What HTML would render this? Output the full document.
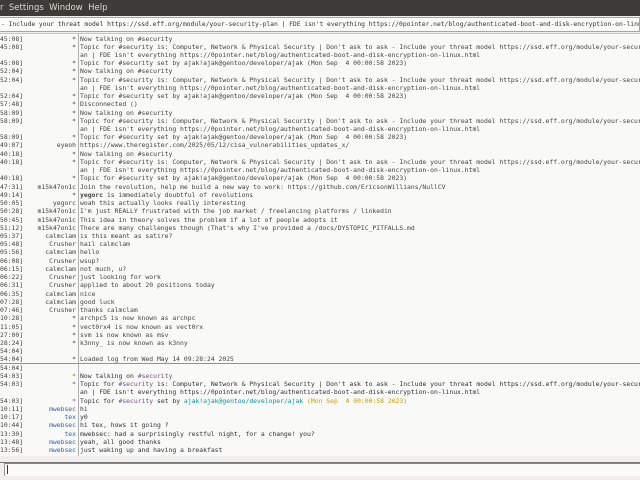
<!DOCTYPE html>
<html><head><meta charset="utf-8"><style>
*{margin:0;padding:0;box-sizing:border-box}
body{width:640px;height:480px;overflow:hidden;background:#f0efed;position:relative;font-family:"DejaVu Sans Mono","Liberation Mono",monospace}
#menu{position:absolute;left:0;top:0;width:640px;height:16px;background:#3c3b37;color:#dfdbd2;font:8.5px "DejaVu Sans","Liberation Sans",sans-serif;line-height:16px;white-space:pre}
#topic{position:absolute;left:0;top:17px;width:640px;height:15px;background:#fbfbfa;border:1px solid #a8a6a2;border-left:none;font-size:6.3px;line-height:13px;color:#333;white-space:pre;padding-left:1px;overflow:hidden}
#chat{position:absolute;left:0;top:33px;width:640px;height:423px;background:#f9f9f7;overflow:hidden;border-top:1px solid #c8c6c2}
#vl{position:absolute;left:78px;top:0;width:1px;height:423px;background:#b0b0b0}
.r{position:absolute;left:0;width:640px;height:8.23px;font-size:6.4px;line-height:8.23px;white-space:pre;color:#444}
.t{position:absolute;left:0}
.n{position:absolute;right:564px;text-align:right}
.x{position:absolute;left:80px}
.p{color:#75507b}.g{color:#4e9a06}.c{color:#06989a}.y{color:#c4a000}.b{color:#3465a4}
.low .x{color:#2e3436}
#sep{position:absolute;left:0;width:640px;height:1px;background:#c0855c;z-index:5}
#inp{position:absolute;left:4px;top:463px;width:640px;height:13px;background:#fbfbfa;border-top:1px solid #888;border-left:1px solid #999}
#line{position:absolute;left:0;top:462px;width:640px;height:1px;background:#777}
#caret{position:absolute;left:7px;top:465px;width:1px;height:9px;background:#333}
</style></head><body>
<div id="menu">r  Settings  Window  Help</div>
<div id="topic">- Include your threat model https://ssd.eff.org/module/your-security-plan | FDE isn't everything https://0pointer.net/blog/authenticated-boot-and-disk-encryption-on-linux.html</div>
<div id="chat">
<div id="vl"></div>
<div class="r" style="top:0.5px"><span class="t">45:08]</span><span class="n">*</span><span class="x">Now talking on #security</span></div>
<div class="r" style="top:8.73px"><span class="t">45:08]</span><span class="n">*</span><span class="x">Topic for #security is: Computer, Network &amp; Physical Security | Don't ask to ask - Include your threat model https://ssd.eff.org/module/your-security-plan</span></div>
<div class="r" style="top:16.96px"><span class="x">an | FDE isn't everything https://0pointer.net/blog/authenticated-boot-and-disk-encryption-on-linux.html</span></div>
<div class="r" style="top:25.19px"><span class="t">45:08]</span><span class="n">*</span><span class="x">Topic for #security set by ajak!ajak@gentoo/developer/ajak (Mon Sep  4 00:00:58 2023)</span></div>
<div class="r" style="top:33.42px"><span class="t">52:04]</span><span class="n">*</span><span class="x">Now talking on #security</span></div>
<div class="r" style="top:41.65px"><span class="t">52:04]</span><span class="n">*</span><span class="x">Topic for #security is: Computer, Network &amp; Physical Security | Don't ask to ask - Include your threat model https://ssd.eff.org/module/your-security-plan</span></div>
<div class="r" style="top:49.88px"><span class="x">an | FDE isn't everything https://0pointer.net/blog/authenticated-boot-and-disk-encryption-on-linux.html</span></div>
<div class="r" style="top:58.11px"><span class="t">52:04]</span><span class="n">*</span><span class="x">Topic for #security set by ajak!ajak@gentoo/developer/ajak (Mon Sep  4 00:00:58 2023)</span></div>
<div class="r" style="top:66.34px"><span class="t">57:48]</span><span class="n">*</span><span class="x">Disconnected ()</span></div>
<div class="r" style="top:74.57px"><span class="t">58:09]</span><span class="n">*</span><span class="x">Now talking on #security</span></div>
<div class="r" style="top:82.8px"><span class="t">58:09]</span><span class="n">*</span><span class="x">Topic for #security is: Computer, Network &amp; Physical Security | Don't ask to ask - Include your threat model https://ssd.eff.org/module/your-security-plan</span></div>
<div class="r" style="top:91.03px"><span class="x">an | FDE isn't everything https://0pointer.net/blog/authenticated-boot-and-disk-encryption-on-linux.html</span></div>
<div class="r" style="top:99.26px"><span class="t">58:09]</span><span class="n">*</span><span class="x">Topic for #security set by ajak!ajak@gentoo/developer/ajak (Mon Sep  4 00:00:58 2023)</span></div>
<div class="r" style="top:107.49px"><span class="t">49:07]</span><span class="n">eyeoh</span><span class="x">https://www.theregister.com/2025/05/12/cisa_vulnerabilities_updates_x/</span></div>
<div class="r" style="top:115.72px"><span class="t">40:18]</span><span class="n">*</span><span class="x">Now talking on #security</span></div>
<div class="r" style="top:123.95px"><span class="t">40:18]</span><span class="n">*</span><span class="x">Topic for #security is: Computer, Network &amp; Physical Security | Don't ask to ask - Include your threat model https://ssd.eff.org/module/your-security-plan</span></div>
<div class="r" style="top:132.18px"><span class="x">an | FDE isn't everything https://0pointer.net/blog/authenticated-boot-and-disk-encryption-on-linux.html</span></div>
<div class="r" style="top:140.41px"><span class="t">40:18]</span><span class="n">*</span><span class="x">Topic for #security set by ajak!ajak@gentoo/developer/ajak (Mon Sep  4 00:00:58 2023)</span></div>
<div class="r" style="top:148.64px"><span class="t">47:31]</span><span class="n">m15k47on1c</span><span class="x">Join the revolution, help me build a new way to work: https://github.com/EricsonWillians/NullCV</span></div>
<div class="r" style="top:156.87px"><span class="t">49:14]</span><span class="n">*</span><span class="x"><b>yegorc</b> is immediately doubtful of revolutions</span></div>
<div class="r" style="top:165.1px"><span class="t">50:05]</span><span class="n">yegorc</span><span class="x">woah this actually looks really interesting</span></div>
<div class="r" style="top:173.33px"><span class="t">50:28]</span><span class="n">m15k47on1c</span><span class="x">I'm just REALLY frustrated with the job market / freelancing platforms / linkedin</span></div>
<div class="r" style="top:181.56px"><span class="t">50:45]</span><span class="n">m15k47on1c</span><span class="x">This idea in theory solves the problem if a lot of people adopts it</span></div>
<div class="r" style="top:189.79px"><span class="t">51:12]</span><span class="n">m15k47on1c</span><span class="x">There are many challenges though (That's why I've provided a /docs/DYSTOPIC_PITFALLS.md</span></div>
<div class="r" style="top:198.02px"><span class="t">05:37]</span><span class="n">calmclam</span><span class="x">is this meant as satire?</span></div>
<div class="r" style="top:206.25px"><span class="t">05:48]</span><span class="n">Crusher</span><span class="x">hail calmclam</span></div>
<div class="r" style="top:214.48px"><span class="t">05:56]</span><span class="n">calmclam</span><span class="x">hello</span></div>
<div class="r" style="top:222.71px"><span class="t">06:08]</span><span class="n">Crusher</span><span class="x">wsup?</span></div>
<div class="r" style="top:230.94px"><span class="t">06:15]</span><span class="n">calmclam</span><span class="x">not much, u?</span></div>
<div class="r" style="top:239.17px"><span class="t">06:22]</span><span class="n">Crusher</span><span class="x">just looking for work</span></div>
<div class="r" style="top:247.4px"><span class="t">06:31]</span><span class="n">Crusher</span><span class="x">applied to about 20 positions today</span></div>
<div class="r" style="top:255.63px"><span class="t">06:35]</span><span class="n">calmclam</span><span class="x">nice</span></div>
<div class="r" style="top:263.86px"><span class="t">07:28]</span><span class="n">calmclam</span><span class="x">good luck</span></div>
<div class="r" style="top:272.09px"><span class="t">07:46]</span><span class="n">Crusher</span><span class="x">thanks calmclam</span></div>
<div class="r" style="top:280.32px"><span class="t">10:28]</span><span class="n">*</span><span class="x">archpc5 is now known as archpc</span></div>
<div class="r" style="top:288.55px"><span class="t">11:05]</span><span class="n">*</span><span class="x">vect0rx4 is now known as vect0rx</span></div>
<div class="r" style="top:296.78px"><span class="t">27:00]</span><span class="n">*</span><span class="x">svm is now known as msv</span></div>
<div class="r" style="top:305.01px"><span class="t">28:24]</span><span class="n">*</span><span class="x">k3nny_ is now known as k3nny</span></div>
<div class="r" style="top:313.24px"><span class="t">54:04]</span></div>
<div class="r" style="top:321.47px"><span class="t">54:04]</span><span class="n">*</span><span class="x">Loaded log from Wed May 14 09:28:24 2025</span></div>
<div id="sep" style="top:329px"></div>
<div class="r low" style="top:329.7px"><span class="t">54:04]</span></div>
<div class="r low" style="top:337.93px"><span class="t">54:03]</span><span class="n g">*</span><span class="x">Now talking on <span class="p">#security</span></span></div>
<div class="r low" style="top:346.16px"><span class="t">54:03]</span><span class="n p">*</span><span class="x">Topic for <span class="p">#security</span> is: Computer, Network &amp; Physical Security | Don't ask to ask - Include your threat model https://ssd.eff.org/module/your-security-plan</span></div>
<div class="r low" style="top:354.39px"><span class="x">an | FDE isn't everything https://0pointer.net/blog/authenticated-boot-and-disk-encryption-on-linux.html</span></div>
<div class="r low" style="top:362.62px"><span class="t">54:03]</span><span class="n p">*</span><span class="x">Topic for <span class="p">#security</span> set by <span class="c">ajak!ajak@gentoo/developer/ajak</span> <span class="y">(Mon Sep  4 00:00:58 2023)</span></span></div>
<div class="r low" style="top:370.85px"><span class="t">10:11]</span><span class="n b">mwebsec</span><span class="x">hi</span></div>
<div class="r low" style="top:379.08px"><span class="t">10:17]</span><span class="n b">tex</span><span class="x">y0</span></div>
<div class="r low" style="top:387.31px"><span class="t">10:44]</span><span class="n b">mwebsec</span><span class="x">hi tex, hows it going ?</span></div>
<div class="r low" style="top:395.54px"><span class="t">13:30]</span><span class="n b">tex</span><span class="x">mwebsec: had a surprisingly restful night, for a change! you?</span></div>
<div class="r low" style="top:403.77px"><span class="t">13:48]</span><span class="n b">mwebsec</span><span class="x">yeah, all good thanks</span></div>
<div class="r low" style="top:412px"><span class="t">13:56]</span><span class="n b">mwebsec</span><span class="x">just waking up and having a breakfast</span></div>
</div>
<div id="line"></div>
<div id="inp"></div>
<div id="caret"></div>
</body></html>
